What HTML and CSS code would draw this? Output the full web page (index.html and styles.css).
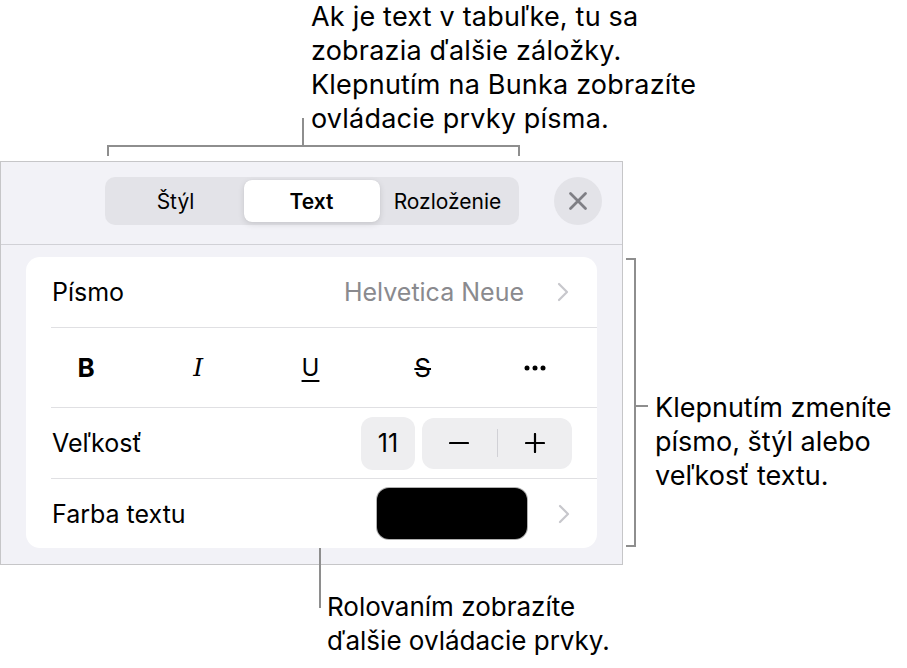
FILE: index.html
```html
<!DOCTYPE html>
<html lang="sk">
<head>
    <meta charset="UTF-8">
    <meta name="viewport" content="width=device-width, initial-scale=1.0">
    <title>Text – ovládacie prvky písma</title>
    <link rel="stylesheet" href="styles.css">
</head>
<body>
    <div class="page">
        <!-- Callout above the tabs -->
        <div class="top-note">
            <p class="note">Ak je text v tabuľke, tu sa<br>zobrazia ďalšie záložky.<br>Klepnutím na Bunka zobrazíte<br>ovládacie prvky písma.</p>
            <div class="bracket-top"></div>
        </div>

        <div class="main">
            <div class="panel">
                <div class="panel-head">
                    <div class="segmented">
                        <span class="seg">Štýl</span>
                        <span class="seg seg-active">Text</span>
                        <span class="seg">Rozloženie</span>
                    </div>
                    <button class="close" aria-label="Zavrieť">
                        <svg width="20" height="20" viewBox="0 0 20 20"><path d="M2.5 2.5 L17.5 17.5 M17.5 2.5 L2.5 17.5" stroke="#7f7f85" stroke-width="2.8" stroke-linecap="round" fill="none"/></svg>
                    </button>
                </div>

                <div class="card">
                    <div class="row row-font">
                        <span class="label">Písmo</span>
                        <span class="value">Helvetica Neue</span>
                        <svg class="chevron" width="12" height="20" viewBox="0 0 12 20"><polyline points="2,2 10,10 2,18" fill="none" stroke="#c7c7cc" stroke-width="2.2" stroke-linecap="round" stroke-linejoin="round"/></svg>
                    </div>
                    <div class="sep"></div>
                    <div class="row-format">
                        <span class="fmt fmt-b">B</span>
                        <span class="fmt fmt-i">I</span>
                        <span class="fmt fmt-u">U</span>
                        <span class="fmt fmt-s">S</span>
                        <span class="fmt">
                            <svg width="22" height="6" viewBox="0 0 22 6"><circle cx="3" cy="3" r="2.5"/><circle cx="11" cy="3" r="2.5"/><circle cx="19" cy="3" r="2.5"/></svg>
                        </span>
                    </div>
                    <div class="sep"></div>
                    <div class="row row-size">
                        <span class="label">Veľkosť</span>
                        <span class="size-num">11</span>
                        <div class="stepper">
                            <span class="step-btn">
                                <svg width="20" height="20" viewBox="0 0 20 20"><path d="M1 10 H19" stroke="#000" stroke-width="2.2" stroke-linecap="round"/></svg>
                            </span>
                            <span class="step-div"></span>
                            <span class="step-btn">
                                <svg width="20" height="20" viewBox="0 0 20 20"><path d="M1 10 H19 M10 1 V19" stroke="#000" stroke-width="2.2" stroke-linecap="round"/></svg>
                            </span>
                        </div>
                    </div>
                    <div class="sep"></div>
                    <div class="row row-color">
                        <span class="label">Farba textu</span>
                        <span class="swatch"></span>
                        <svg class="chevron" width="12" height="20" viewBox="0 0 12 20"><polyline points="2,2 10,10 2,18" fill="none" stroke="#c7c7cc" stroke-width="2.2" stroke-linecap="round" stroke-linejoin="round"/></svg>
                    </div>
                </div>
            </div>

            <!-- Callout at the right -->
            <div class="side-note">
                <div class="bracket-side"></div>
                <div class="tick"></div>
                <p class="note">Klepnutím zmeníte<br>písmo, štýl alebo<br>veľkosť textu.</p>
            </div>
        </div>

        <!-- Callout below -->
        <div class="bottom-note">
            <div class="leader"></div>
            <p class="note">Rolovaním zobrazíte<br>ďalšie ovládacie prvky.</p>
        </div>
    </div>
</body>
</html>
```

FILE: styles.css
```css
* {
    box-sizing: border-box;
}

body {
    margin: 0;
    background-color: #ffffff;
    font-family: 'Inter', 'Noto Sans', sans-serif;
    color: #000000;
}

.page {
    width: 907px;
    height: 668px;
    overflow: hidden;
}

/* Callout text */
.note {
    margin: 0;
    font-size: 27px;
    line-height: 34px;
    white-space: nowrap;
    color: #000000;
}

.top-note .note {
    margin-left: 311px;
    letter-spacing: 0.2px;
}

.bracket-top {
    position: relative;
    margin: 9px 0 5px 107px;
    width: 413px;
    height: 11px;
    border: 2px solid #8e8e8e;
    border-bottom: 0;
}

.bracket-top::before {
    content: "";
    position: absolute;
    left: 193px;
    top: -29px;
    width: 2px;
    height: 29px;
    background-color: #8e8e8e;
}

.main {
    display: flex;
    align-items: flex-start;
}

/* Format panel */
.panel {
    flex: none;
    width: 623px;
    height: 404px;
    background-color: #f2f2f7;
    border: 1px solid #c6c6c8;
}

.panel-head {
    display: grid;
    grid-template-columns: 1fr auto 1fr;
    align-items: center;
    padding: 15px 0 19px;
    border-bottom: 1px solid #d1d1d6;
}

.segmented {
    grid-column: 2;
    display: grid;
    grid-template-columns: repeat(3, 1fr);
    width: 414px;
    height: 48px;
    padding: 3px;
    background-color: #e3e3e8;
    border-radius: 10px;
}

.seg {
    display: flex;
    align-items: center;
    justify-content: center;
    font-size: 21px;
    border-radius: 8px;
}

.seg-active {
    background-color: #ffffff;
    font-weight: 600;
    box-shadow: 0 2px 6px rgba(0, 0, 0, 0.12), 0 0 1px rgba(0, 0, 0, 0.1);
}

.close {
    grid-column: 3;
    justify-self: end;
    margin-right: 20px;
    width: 48px;
    height: 48px;
    padding: 0;
    border: 0;
    border-radius: 50%;
    background-color: #e3e3e8;
    display: flex;
    align-items: center;
    justify-content: center;
}

.card {
    margin: 12px 25px 16px;
    background-color: #ffffff;
    border-radius: 14px;
}

.row {
    display: flex;
    align-items: center;
    padding: 0 28px 0 26px;
    font-size: 25px;
}

.row-font {
    height: 70px;
}

.row-size {
    height: 70px;
    padding-right: 25px;
}

.row-color {
    height: 69px;
    padding-right: 27px;
}

.label {
    flex: 1;
}

.value {
    color: #8a8a8e;
    margin-right: 33px;
}

.sep {
    height: 1px;
    margin-left: 25px;
    background-color: #e0e0e3;
}

/* Bold / italic / underline / strike row */
.row-format {
    height: 79px;
    display: grid;
    grid-template-columns: repeat(5, 1fr);
    padding: 0 6px 0 4px;
}

.fmt {
    display: flex;
    align-items: center;
    justify-content: center;
    font-size: 26px;
}

.fmt-b {
    font-weight: 700;
}

.fmt-i {
    font-family: 'DejaVu Serif', serif;
    font-style: italic;
    font-size: 25px;
}

.fmt-u {
    font-size: 24px;
    text-decoration: underline;
    text-decoration-thickness: 2px;
    text-underline-offset: 4px;
}

.fmt-s {
    text-decoration: line-through;
    text-decoration-thickness: 2px;
}

.size-num {
    display: flex;
    align-items: center;
    justify-content: center;
    width: 54px;
    height: 53px;
    margin-right: 7px;
    background-color: #eeeef0;
    border-radius: 12px;
}

.stepper {
    display: flex;
    align-items: center;
    width: 150px;
    height: 51px;
    background-color: #eeeef0;
    border-radius: 12px;
}

.step-btn {
    flex: 1;
    display: flex;
    align-items: center;
    justify-content: center;
}

.step-div {
    width: 1px;
    height: 28px;
    background-color: #d1d1d6;
}

.swatch {
    width: 150px;
    height: 51px;
    margin-right: 31px;
    background-color: #000000;
    border-radius: 12px;
    box-shadow: 0 0 0 1px #b0b0b0;
}

/* Right callout */
.side-note {
    display: flex;
    align-items: flex-start;
}

.bracket-side {
    flex: none;
    margin: 97px 0 0 3px;
    width: 10px;
    height: 289px;
    border: 2px solid #8e8e8e;
    border-left: 0;
}

.tick {
    flex: none;
    width: 12px;
    height: 2px;
    margin-top: 244px;
    background-color: #8e8e8e;
}

.side-note .note {
    margin: 230px 0 0 7px;
}

/* Bottom callout */
.bottom-note {
    display: flex;
    align-items: flex-start;
    margin-left: 319px;
}

.leader {
    flex: none;
    width: 2px;
    height: 60px;
    margin-top: -17px;
    background-color: #8e8e8e;
}

.bottom-note .note {
    margin: 25px 0 0 6px;
    font-size: 26px;
}
```
